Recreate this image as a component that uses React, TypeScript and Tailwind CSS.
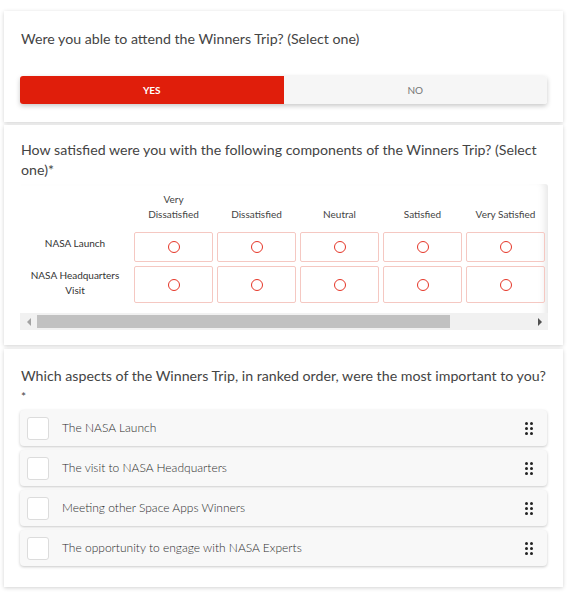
import React from 'react';

const columns = ['Very Dissatisfied', 'Dissatisfied', 'Neutral', 'Satisfied', 'Very Satisfied'];
const rows = [
  { label: 'NASA Launch', h: 'h-[30px]' },
  { label: 'NASA Headquarters Visit', h: 'h-[37px]' },
];
const rankItems = [
  'The NASA Launch',
  'The visit to NASA Headquarters',
  'Meeting other Space Apps Winners',
  'The opportunity to engage with NASA Experts',
];

function Card({ children, className }: { children: React.ReactNode; className?: string }) {
  return (
    <div className={`bg-white mx-[4px] w-[559px] px-[16px] shadow-[0_1px_4px_rgba(0,0,0,0.18)] ${className ?? ''}`}>
      {children}
    </div>
  );
}

function DragIcon() {
  return (
    <svg width="8" height="13" viewBox="0 0 8 13" className="text-[#222]">
      {[1.5, 6.5].map((x) =>
        [1.5, 6.5, 11.5].map((y) => <circle key={`${x}-${y}`} cx={x} cy={y} r="1.5" fill="currentColor" />)
      )}
    </svg>
  );
}

function App() {
  return (
    <div className="w-[576px] h-[608px] bg-white pt-[11px] font-['Lato','Noto_Sans',sans-serif] text-[#444]">
      <Card className="pt-[18px] pb-[18px]">
        <div className="text-[14.2px] leading-[20px] pl-[1px]">Were you able to attend the Winners Trip? (Select one)</div>
        <div className="mt-[27px] flex h-[28px] rounded-[3px] shadow-[0_2px_5px_rgba(0,0,0,0.22)]">
          <div className="flex-1 bg-[#e01e0b] text-white text-[10px] font-bold flex items-center justify-center rounded-l-[3px]">
            YES
          </div>
          <div className="flex-1 bg-[#f6f6f6] text-[#777] text-[10px] flex items-center justify-center rounded-r-[3px]">
            NO
          </div>
        </div>
      </Card>

      <Card className="mt-[3px] pt-[15px] pb-[15px]">
        <div className="text-[14.2px] leading-[20px] pl-[1px]">
          How satisfied were you with the following components of the Winners Trip? (Select one)*
        </div>
        <div className="mt-[4px] w-[528px] overflow-hidden rounded-t-[3px] shadow-[inset_-8px_0_8px_-6px_rgba(0,0,0,0.12)]">
          <div className="grid grid-cols-[110px_repeat(5,79px)] gap-x-[4px] gap-y-[4px]">
            <div className="h-[44px]" />
            {columns.map((c) => (
              <div key={c} className="h-[44px] flex items-end justify-center pb-[6px] text-[10px] leading-[15px] text-center text-[#444]">
                {c === 'Very Dissatisfied' ? (
                  <span>
                    Very
                    <br />
                    Dissatisfied
                  </span>
                ) : (
                  c
                )}
              </div>
            ))}
            {rows.map((r, i) => (
              <React.Fragment key={r.label}>
                <div
                  className={`${r.h} flex items-center justify-center text-center text-[10px] leading-[15px] text-[#333] px-[4px] ${i === 0 ? 'pb-[7px]' : 'pb-[3px]'}`}
                >
                  {r.label === 'NASA Headquarters Visit' ? (
                    <span>
                      NASA Headquarters
                      <br />
                      Visit
                    </span>
                  ) : (
                    r.label
                  )}
                </div>
                {columns.map((c) => (
                  <div
                    key={c}
                    className={`${r.h} border border-[#f5c8c2] rounded-[2px] flex items-center justify-center`}
                  >
                    <div className="w-[12px] h-[12px] rounded-full border-[1.5px] border-[#e53527]" />
                  </div>
                ))}
              </React.Fragment>
            ))}
          </div>
          <div className="mt-[10px] h-[17px] bg-[#f1f1f1] flex items-center">
            <div className="w-[17px] flex items-center justify-center">
              <div className="w-0 h-0 border-y-[4px] border-y-transparent border-r-[4px] border-r-[#a3a3a3]" />
            </div>
            <div className="w-[413px] h-[13px] bg-[#c1c1c1]" />
            <div className="flex-1" />
            <div className="w-[17px] flex items-center justify-center">
              <div className="w-0 h-0 border-y-[4px] border-y-transparent border-l-[4px] border-l-[#505050]" />
            </div>
          </div>
        </div>
      </Card>

      <Card className="mt-[4px] pt-[17px] pb-[21px]">
        <div className="text-[14.2px] leading-[19px] pl-[1px]">
          Which aspects of the Winners Trip, in ranked order, were the most important to you?
        </div>
        <div className="text-[12px] leading-[18px] pl-[1px] pt-[3px]">*</div>
        <div className="mt-[4px] flex flex-col gap-[4px]">
          {rankItems.map((item) => (
            <div
              key={item}
              className="h-[36px] bg-[#f8f8f8] rounded-[4px] shadow-[0_1px_3px_rgba(0,0,0,0.22)] flex items-center pl-[7px] pr-[14px]"
            >
              <div className="w-[22px] h-[23px] bg-white border border-[#dcdcdc] rounded-[3px]" />
              <div className="ml-[13px] flex-1 text-[12px] font-light text-[#2e2e2e]">{item}</div>
              <DragIcon />
            </div>
          ))}
        </div>
      </Card>
    </div>
  );
}

export default App;
